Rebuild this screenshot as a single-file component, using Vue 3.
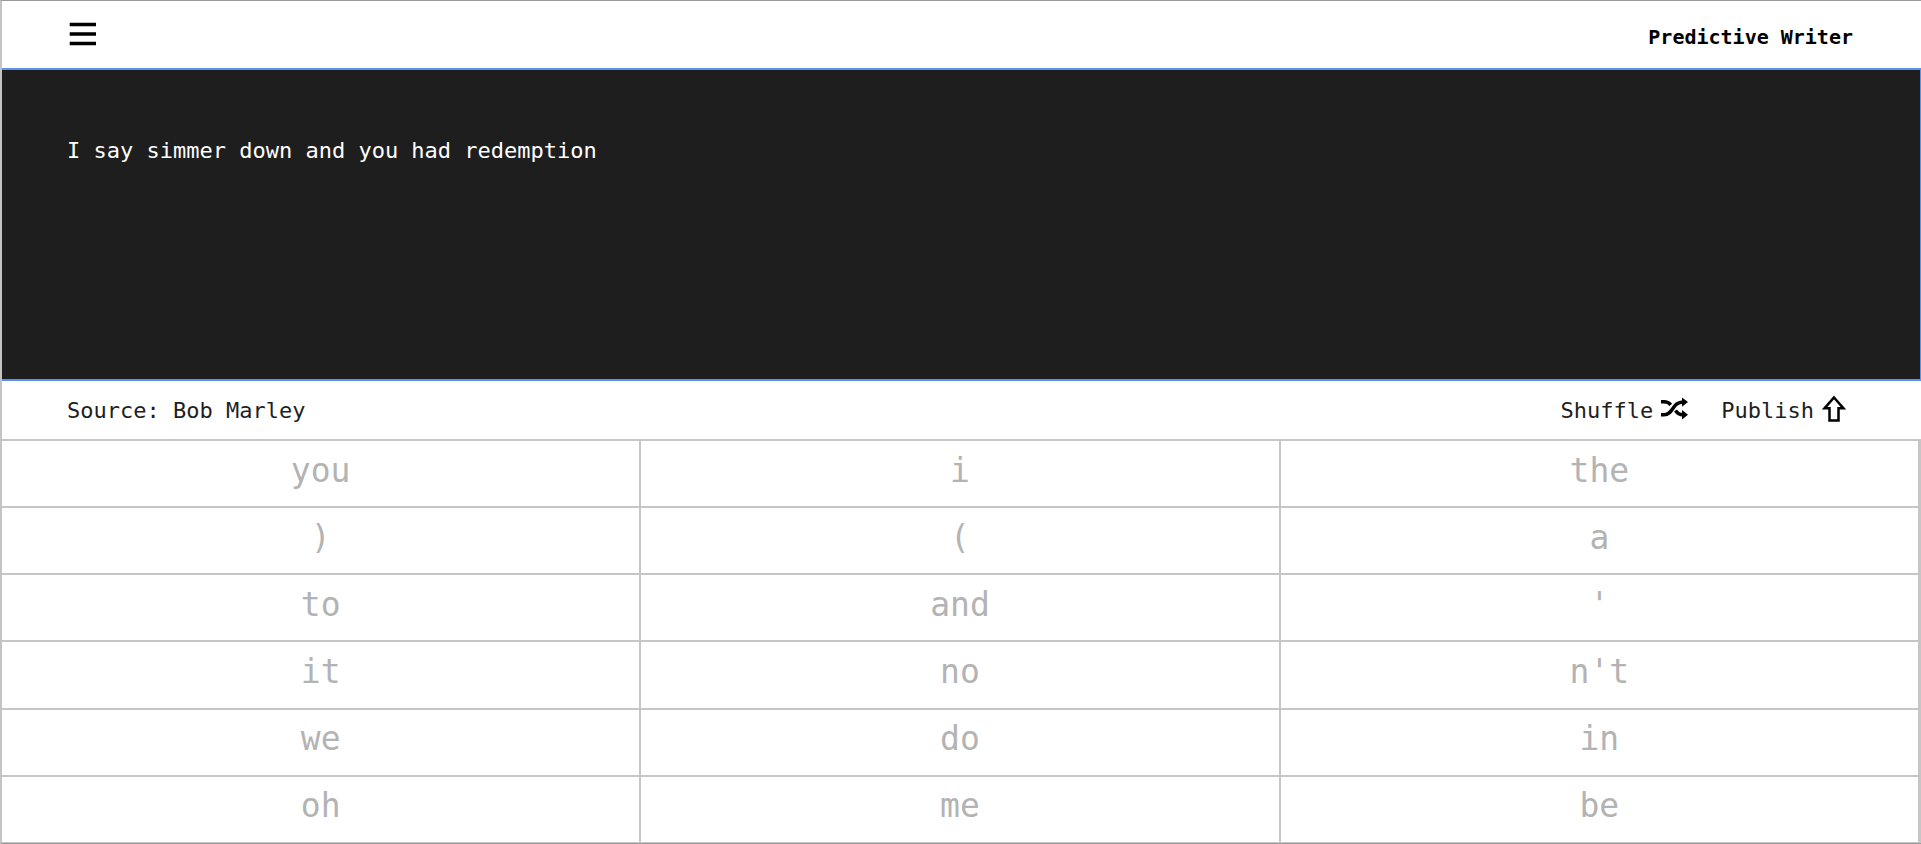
<script setup>
import { ref } from 'vue'

const draft = ref('I say simmer down and you had redemption')
const words = [
  'you', 'i', 'the',
  ')', '(', 'a',
  'to', 'and', "'",
  'it', 'no', "n't",
  'we', 'do', 'in',
  'oh', 'me', 'be',
]

function addWord(word) {
  draft.value += ' ' + word
}
</script>

<template>
  <div class="writer">
    <header class="header">
      <button class="menu" type="button" aria-label="Menu">
        <svg width="30" height="24" viewBox="0 0 30 24" aria-hidden="true">
          <path d="M2.700 2.500H29M2.700 12H29M2.700 21.500H29" stroke="#000" stroke-width="3.700" />
        </svg>
      </button>
      <h1 class="title">Predictive Writer</h1>
    </header>

    <textarea v-model="draft" class="draft" aria-label="Draft" spellcheck="false"></textarea>

    <div class="toolbar">
      <span>Source: Bob Marley</span>
      <div class="actions">
        <button class="action" type="button">
          Shuffle
          <svg class="icon" width="28" height="24" viewBox="0 0 28 24" aria-hidden="true">
            <g fill="none" stroke="#000" stroke-width="3.500">
              <path d="M0 4.700H3C6 4.700 8 5.700 9.800 7.800" />
              <path d="M0 17.800H3C12.500 17.800 11 5 22 5" />
              <path d="M14.500 13.500C16.500 16.500 18.500 17.800 22 17.800" />
            </g>
            <path d="M21 .5L27 5L21 9.800ZM21 13L27 17.800L21 22.500Z" />
          </svg>
        </button>
        <button class="action" type="button">
          Publish
          <svg class="icon publish" width="24" height="28" viewBox="0 0 24 28" aria-hidden="true">
            <path d="M12 2.500L21.500 13.300H16.500V25.500H7.500V13.300H2.500Z" fill="none" stroke="#000" stroke-width="2.500" />
          </svg>
        </button>
      </div>
    </div>

    <div class="words">
      <button v-for="word in words" :key="word" class="word" type="button" @click="addWord(word)">{{ word }}</button>
    </div>
  </div>
</template>

<style>
body {
  margin: 0;
  background: #fff;
}
</style>

<style scoped>
.writer {
  box-sizing: border-box;
  display: flex;
  flex-direction: column;
  min-height: 100vh;
  border-top: 1px solid #999;
  border-bottom: 1px solid #999;
  border-left: 2px solid #c4c4c4;
  background: #fff;
  color: #1e1e1e;
  font: 22px/32px "DejaVu Sans Mono", monospace;
}

button {
  padding: 0;
  border: 0;
  background: none;
  color: inherit;
  font: inherit;
  cursor: pointer;
}

.header,
.toolbar {
  box-sizing: border-box;
  display: flex;
  flex: none;
  align-items: center;
  justify-content: space-between;
  padding: 0 68px 0 65px;
}

.header {
  height: 67px;
}

.menu {
  display: flex;
  padding-bottom: 2px;
}

.title {
  margin: 0;
  padding-top: 4px;
  color: #000;
  font-size: 20px;
  font-weight: bold;
}

.draft {
  box-sizing: border-box;
  display: block;
  flex: none;
  width: 100%;
  height: 313px;
  margin: 0;
  padding: 65px;
  border: solid #5a93ee;
  border-width: 2px 1px 2px 0;
  border-radius: 0;
  outline: none;
  background: #1e1e1e;
  color: #fff;
  font: inherit;
  resize: none;
}

.toolbar {
  height: 58px;
  padding-top: 2px;
}

.actions {
  display: flex;
  gap: 32px;
}

.action {
  display: flex;
  align-items: center;
  gap: 8px;
}

.icon {
  display: block;
  margin-bottom: 4px;
}

.publish {
  margin-right: 7px;
}

.words {
  display: grid;
  flex: 1;
  grid-template-columns: repeat(3, 1fr);
  grid-auto-rows: 1fr;
  gap: 2px;
  padding: 2px 3px 1px 0;
  background: #c6c6c6;
}

.word {
  padding-bottom: 6px;
  background: #fff;
  color: #b3b3b3;
  font-size: 33px;
}
</style>
